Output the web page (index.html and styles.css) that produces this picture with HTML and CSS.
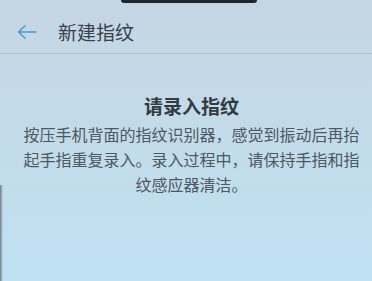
FILE: index.html
```html
<!DOCTYPE html>
<html lang="zh-CN">
<head>
<meta charset="utf-8">
<link rel="stylesheet" href="styles.css">
</head>
<body>
<div class="screen">
  <div class="notch"></div>
  <div class="edge"></div>
  <header class="appbar">
    <svg class="back" width="20" height="14" viewBox="0 0 20 14" aria-hidden="true">
      <path d="M19 7H1.5M8 0.8L1.5 7L8 13.2" fill="none" stroke="#4e97d6" stroke-width="1.4" stroke-linecap="round" stroke-linejoin="round"/>
    </svg>
    <h1 class="title">新建指纹</h1>
  </header>
  <main class="content">
    <h2 class="heading">请录入指纹</h2>
    <p class="desc">按压手机背面的指纹识别器，感觉到振动后再抬起手指重复录入。录入过程中，请保持手指和指纹感应器清洁。</p>
  </main>
</div>
</body>
</html>
```
FILE: styles.css
```css
html, body {
  margin: 0;
  padding: 0;
}
body {
  width: 372px;
  height: 281px;
  overflow: hidden;
  font-family: "Noto Sans CJK SC", "Noto Sans", sans-serif;
}
.screen {
  position: relative;
  width: 372px;
  height: 281px;
  background: linear-gradient(180deg, #c5d6e3 0%, #c3dbe9 45%, #bfe1f2 100%);
  display: flex;
  flex-direction: column;
}
.notch {
  position: absolute;
  top: 0;
  left: 121px;
  width: 136px;
  height: 3px;
  background: #1f252c;
  border-radius: 0 0 6px 6px;
}
.edge {
  position: absolute;
  left: 0;
  top: 185px;
  bottom: 0;
  width: 3px;
  background: linear-gradient(90deg, #6e7c86, rgba(150,170,185,0));
}
.appbar {
  height: 43px;
  padding-top: 10px;
  display: flex;
  align-items: center;
  padding-left: 17px;
  border-bottom: 1px solid #b2c3cf;
  box-sizing: content-box;
  flex: none;
}
.back {
  display: block;
}
.title {
  margin: 0 0 0 21px;
  font-size: 19px;
  font-weight: 400;
  color: #39424a;
  line-height: 24px;
}
.content {
  margin-left: 22px;
  width: 339px;
  text-align: center;
}
.heading {
  margin: 40px 0 0;
  font-size: 19px;
  line-height: 24px;
  font-weight: 700;
  color: #323b43;
}
.desc {
  margin: 4px 0 0;
  font-size: 16px;
  line-height: 25px;
  color: #4d5861;
}
```
